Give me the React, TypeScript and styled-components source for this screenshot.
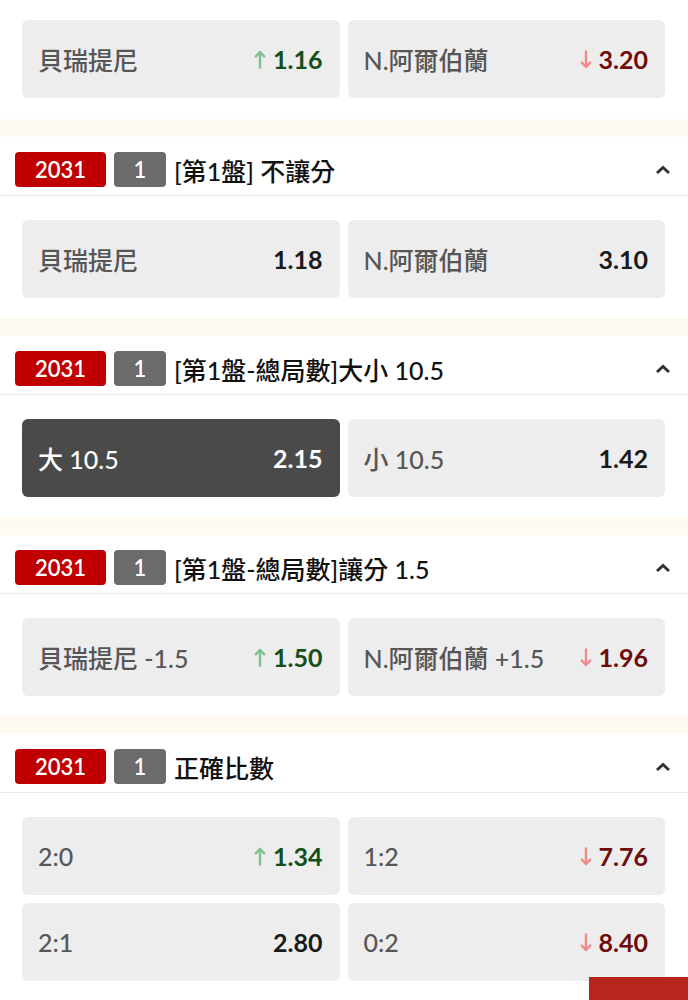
import React from "react";
import styled, { createGlobalStyle } from "styled-components";

const Global = createGlobalStyle`
  html, body { margin: 0; padding: 0; background: #fff; }
  body { font-family: "Lato", "Noto Sans CJK TC", sans-serif; }
  * { box-sizing: border-box; }
`;

const Page = styled.div`
  width: 688px;
  display: flex;
  flex-direction: column;
`;

const Header = styled.div`
  height: 59px;
  display: flex;
  align-items: center;
  padding: 7px 17px 0 15px;
  border-bottom: 1px solid #ececec;
  gap: 8px;
`;

const Badge = styled.span<{ $tone: "red" | "gray"; $w: number }>`
  width: ${(p) => p.$w}px;
  height: 35px;
  border-radius: 4px;
  display: flex;
  align-items: center;
  justify-content: center;
  background: ${(p) => (p.$tone === "red" ? "#c00000" : "#6b6b6b")};
  color: #fff;
  font-size: 22px;
  font-weight: 600;
  font-family: "Lato", sans-serif;
`;

const Title = styled.span`
  flex: 1;
  font-size: 25px;
  font-weight: 500;
  color: #111;
  white-space: nowrap;
`;

const Content = styled.div<{ $top: number; $bottom: number }>`
  padding: ${(p) => p.$top}px 23px ${(p) => p.$bottom}px 22px;
  display: grid;
  grid-template-columns: 1fr 1fr;
  gap: 8px;
`;

const Card = styled.div<{ $active?: boolean }>`
  height: 78px;
  border-radius: 6px;
  background: ${(p) => (p.$active ? "#4a4a4a" : "#ededed")};
  display: flex;
  align-items: center;
  justify-content: space-between;
  padding: 0 17px 0 16px;
`;

const Label = styled.span<{ $active?: boolean }>`
  font-size: 25px;
  font-weight: 500;
  color: ${(p) => (p.$active ? "#ffffff" : "#565656")};
  white-space: nowrap;
`;

const Odds = styled.span<{ $trend?: "up" | "down"; $active?: boolean }>`
  display: flex;
  align-items: center;
  gap: 7px;
  font-size: 25px;
  font-weight: 700;
  color: ${(p) =>
    p.$active ? "#ffffff" : p.$trend === "up" ? "#144f19" : p.$trend === "down" ? "#6e0c0c" : "#1a1a1a"};
`;

const Band = styled.div`
  height: 18px;
  background: #fefaf2;
`;

const FloatButton = styled.div`
  position: fixed;
  right: 0;
  bottom: 0;
  width: 99px;
  height: 23px;
  background: #b7261d;
`;

const Arrow = ({ dir }: { dir: "up" | "down" }) => (
  <svg width="12" height="19" viewBox="0 0 12 19" style={{ display: "block" }}>
    <g
      stroke={dir === "up" ? "#7fbf8c" : "#f08a8a"}
      strokeWidth="2.4"
      fill="none"
      strokeLinecap="round"
      strokeLinejoin="round"
      transform={dir === "down" ? "rotate(180 6 9.5)" : undefined}
    >
      <line x1="6" y1="2" x2="6" y2="17.5" />
      <polyline points="1.8,6.4 6,2 10.2,6.4" />
    </g>
  </svg>
);

const Chevron = () => (
  <svg width="16" height="10" viewBox="0 0 16 10">
    <polyline points="2,8 8,2.5 14,8" stroke="#333" strokeWidth="3" fill="none" strokeLinejoin="miter" />
  </svg>
);

type Sel = { label: string; odds: string; trend?: "up" | "down"; active?: boolean };

const Selection = ({ s }: { s: Sel }) => (
  <Card $active={s.active}>
    <Label $active={s.active}>{s.label}</Label>
    <Odds $trend={s.trend} $active={s.active}>
      {s.trend && <Arrow dir={s.trend} />}
      {s.odds}
    </Odds>
  </Card>
);

type Market = { title?: string; top: number; bottom: number; sels: Sel[] };

const markets: Market[] = [
  {
    top: 20,
    bottom: 21,
    sels: [
      { label: "貝瑞提尼", odds: "1.16", trend: "up" },
      { label: "N.阿爾伯蘭", odds: "3.20", trend: "down" },
    ],
  },
  {
    title: "[第1盤] 不讓分",
    top: 24,
    bottom: 20,
    sels: [
      { label: "貝瑞提尼", odds: "1.18" },
      { label: "N.阿爾伯蘭", odds: "3.10" },
    ],
  },
  {
    title: "[第1盤-總局數]大小 10.5",
    top: 24,
    bottom: 20,
    sels: [
      { label: "大 10.5", odds: "2.15", active: true },
      { label: "小 10.5", odds: "1.42" },
    ],
  },
  {
    title: "[第1盤-總局數]讓分 1.5",
    top: 24,
    bottom: 20,
    sels: [
      { label: "貝瑞提尼 -1.5", odds: "1.50", trend: "up" },
      { label: "N.阿爾伯蘭 +1.5", odds: "1.96", trend: "down" },
    ],
  },
  {
    title: "正確比數",
    top: 24,
    bottom: 20,
    sels: [
      { label: "2:0", odds: "1.34", trend: "up" },
      { label: "1:2", odds: "7.76", trend: "down" },
      { label: "2:1", odds: "2.80" },
      { label: "0:2", odds: "8.40", trend: "down" },
    ],
  },
];

export default function App() {
  return (
    <Page>
      <Global />
      {markets.map((m, i) => (
        <React.Fragment key={i}>
          {m.title && (
            <Header>
              <Badge $tone="red" $w={91}>2031</Badge>
              <Badge $tone="gray" $w={52}>1</Badge>
              <Title>{m.title}</Title>
              <Chevron />
            </Header>
          )}
          <Content $top={m.top} $bottom={m.bottom}>
            {m.sels.map((s, j) => (
              <Selection key={j} s={s} />
            ))}
          </Content>
          {i < markets.length - 1 && <Band />}
        </React.Fragment>
      ))}
      <FloatButton />
    </Page>
  );
}
